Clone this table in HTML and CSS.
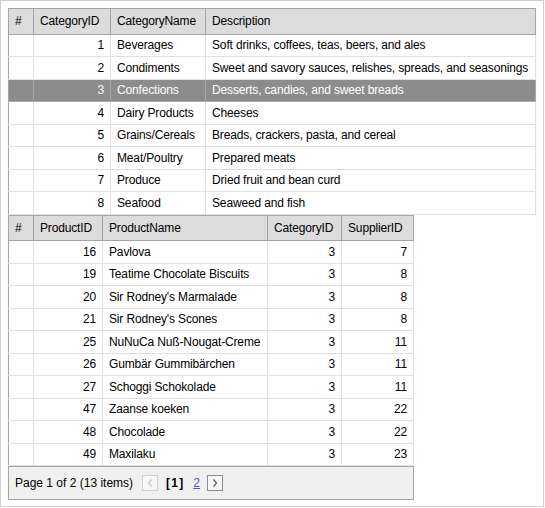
FILE: index.html
```html
<!DOCTYPE html>
<html>
<head>
<meta charset="utf-8">
<link rel="stylesheet" href="styles.css">
</head>
<body>
<div class="frame">
  <table class="grid grid-cat">
    <colgroup>
      <col class="c-idx"><col class="c-catid"><col class="c-catname"><col class="c-desc">
    </colgroup>
    <thead>
      <tr><th>#</th><th>CategoryID</th><th>CategoryName</th><th>Description</th></tr>
    </thead>
    <tbody>
      <tr><td></td><td class="num">1</td><td>Beverages</td><td>Soft drinks, coffees, teas, beers, and ales</td></tr>
      <tr><td></td><td class="num">2</td><td>Condiments</td><td>Sweet and savory sauces, relishes, spreads, and seasonings</td></tr>
      <tr class="sel"><td></td><td class="num">3</td><td>Confections</td><td>Desserts, candies, and sweet breads</td></tr>
      <tr><td></td><td class="num">4</td><td>Dairy Products</td><td>Cheeses</td></tr>
      <tr><td></td><td class="num">5</td><td>Grains/Cereals</td><td>Breads, crackers, pasta, and cereal</td></tr>
      <tr><td></td><td class="num">6</td><td>Meat/Poultry</td><td>Prepared meats</td></tr>
      <tr><td></td><td class="num">7</td><td>Produce</td><td>Dried fruit and bean curd</td></tr>
      <tr><td></td><td class="num">8</td><td>Seafood</td><td>Seaweed and fish</td></tr>
    </tbody>
  </table>
  <div class="detail">
    <table class="grid grid-prod">
      <colgroup>
        <col class="c-idx"><col class="c-pid"><col class="c-pname"><col class="c-pcat"><col class="c-sup">
      </colgroup>
      <thead>
        <tr><th>#</th><th>ProductID</th><th>ProductName</th><th>CategoryID</th><th>SupplierID</th></tr>
      </thead>
      <tbody>
        <tr><td></td><td class="num">16</td><td>Pavlova</td><td class="num">3</td><td class="num">7</td></tr>
        <tr><td></td><td class="num">19</td><td>Teatime Chocolate Biscuits</td><td class="num">3</td><td class="num">8</td></tr>
        <tr><td></td><td class="num">20</td><td>Sir Rodney's Marmalade</td><td class="num">3</td><td class="num">8</td></tr>
        <tr><td></td><td class="num">21</td><td>Sir Rodney's Scones</td><td class="num">3</td><td class="num">8</td></tr>
        <tr><td></td><td class="num">25</td><td>NuNuCa Nuß-Nougat-Creme</td><td class="num">3</td><td class="num">11</td></tr>
        <tr><td></td><td class="num">26</td><td>Gumbär Gummibärchen</td><td class="num">3</td><td class="num">11</td></tr>
        <tr><td></td><td class="num">27</td><td>Schoggi Schokolade</td><td class="num">3</td><td class="num">11</td></tr>
        <tr><td></td><td class="num">47</td><td>Zaanse koeken</td><td class="num">3</td><td class="num">22</td></tr>
        <tr><td></td><td class="num">48</td><td>Chocolade</td><td class="num">3</td><td class="num">22</td></tr>
        <tr><td></td><td class="num">49</td><td>Maxilaku</td><td class="num">3</td><td class="num">23</td></tr>
      </tbody>
    </table>
    <div class="pager">
      <span class="pager-summary">Page 1 of 2 (13 items)</span>
      <span class="pbtn disabled"><svg width="8" height="10" viewBox="0 0 8 10"><path d="M5.5 1.5 L2.5 5 L5.5 8.5" fill="none" stroke="#c8c8c8" stroke-width="1.2"/></svg></span>
      <span class="pcur">[1]</span>
      <a class="plink" href="#">2</a>
      <span class="pbtn"><svg width="8" height="10" viewBox="0 0 8 10"><path d="M2.5 1.5 L5.5 5 L2.5 8.5" fill="none" stroke="#555" stroke-width="1.2"/></svg></span>
    </div>
  </div>
</div>
</body>
</html>
```

FILE: styles.css
```css
html, body {
  margin: 0;
  padding: 0;
  background: #fff;
}
body {
  font-family: "Liberation Sans", Arial, sans-serif;
  font-size: 12px;
  letter-spacing: -0.15px;
  color: #000;
}
.frame {
  width: 544px;
  height: 507px;
  box-sizing: border-box;
  border: 1px solid #d0d0d0;
  padding: 7px;
}
.grid {
  border-collapse: collapse;
  table-layout: fixed;
  border: 1px solid #a5a5a5;
}
.grid-cat {
  width: 528px;
}
.grid-prod {
  width: 406px;
  border-bottom: none;
}
.c-idx { width: 25px; }
.c-catid { width: 77px; }
.c-catname { width: 95px; }
.c-desc { width: auto; }
.c-pid { width: 69px; }
.c-pname { width: 165px; }
.c-pcat { width: 74px; }
.c-sup { width: 72px; }

.grid th {
  background: #dcdcdc;
  font-weight: normal;
  text-align: left;
  height: 24.5px;
  padding: 0 6px;
  border: 1px solid #a5a5a5;
  border-top: none;
  white-space: nowrap;
}
.grid td {
  height: 21.5px;
  padding: 0 6px;
  border: 1px solid #e0e0e0;
  white-space: nowrap;
  overflow: hidden;
}
.grid td:first-child,
.grid th:first-child {
  border-left: none;
}
.grid tbody tr:first-child td {
  border-top: none;
}
.grid td.num {
  text-align: right;
}
.grid tr.sel td {
  background: #8c8c8c;
  color: #fff;
  border-color: #a8a8a8;
}
.detail {
  width: 406px;
}
.pager {
  box-sizing: border-box;
  width: 406px;
  height: 34px;
  background: #f0f0f0;
  border: 1px solid #a5a5a5;
  display: flex;
  align-items: center;
  padding: 0 0 0 6px;
  letter-spacing: 0;
}
.pager-summary {
  margin-right: 9px;
}
.pbtn {
  box-sizing: border-box;
  width: 16px;
  height: 16px;
  border: 1px solid #8c8c8c;
  background: #f7f7f7;
  display: flex;
  align-items: center;
  justify-content: center;
}
.pbtn.disabled {
  border-color: #d0d0d0;
}
.pcur {
  font-weight: bold;
  letter-spacing: 1.2px;
  margin: 0 9px 0 8px;
}
.plink {
  color: #4d5fb2;
  text-decoration: underline;
  margin-right: 7px;
}
```
